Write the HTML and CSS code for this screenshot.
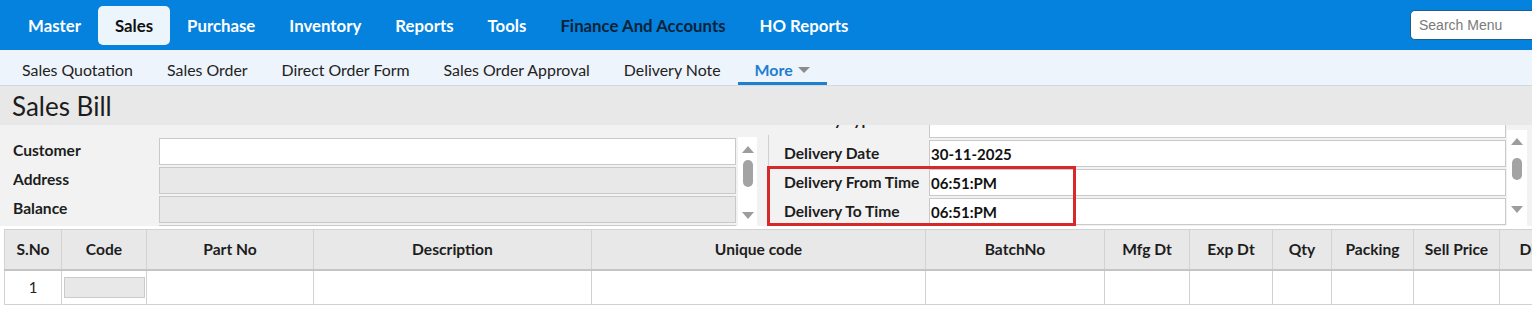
FILE: index.html
```html
<!DOCTYPE html>
<html lang="en">
<head>
<meta charset="UTF-8">
<meta name="viewport" content="width=device-width, initial-scale=1.0">
<title>Sales Bill</title>
<link rel="stylesheet" href="styles.css">
</head>
<body>

<header class="topbar">
  <nav class="main-menu">
    <a href="#master">Master</a>
    <a href="#sales" class="active">Sales</a>
    <a href="#purchase">Purchase</a>
    <a href="#inventory">Inventory</a>
    <a href="#reports">Reports</a>
    <a href="#tools">Tools</a>
    <a href="#finance" class="dark">Finance And Accounts</a>
    <a href="#ho-reports">HO Reports</a>
  </nav>
  <input type="text" class="menu-search" placeholder="Search Menu">
</header>

<nav class="subbar">
  <a href="#quotation">Sales Quotation</a>
  <a href="#order">Sales Order</a>
  <a href="#direct">Direct Order Form</a>
  <a href="#approval">Sales Order Approval</a>
  <a href="#delivery">Delivery Note</a>
  <a href="#more" class="more">More <span class="caret"></span></a>
</nav>

<div class="page-title">
  <h1>Sales Bill</h1>
</div>

<section class="bill-head">
  <!-- Customer details -->
  <div class="panel panel-left">
    <div class="rows">
      <div class="row"><label>Customer</label><input type="text" class="fld"></div>
      <div class="row"><label>Address</label><input type="text" class="fld ro" readonly></div>
      <div class="row"><label>Balance</label><input type="text" class="fld ro" readonly></div>
      <div class="row"><label>Narration</label><input type="text" class="fld"></div>
    </div>
    <div class="vscroll vscroll-left">
      <span class="arr-up"></span>
      <span class="thumb"></span>
      <span class="arr-down"></span>
    </div>
  </div>

  <div class="divider"></div>

  <!-- Delivery details -->
  <div class="panel panel-right">
    <div class="rows">
      <div class="rows-inner">
        <div class="row cut"><label>Delivery Type</label><input type="text" class="fld"></div>
        <div class="row"><label>Delivery Date</label><input type="text" class="fld" value="30-11-2025"></div>
        <div class="row"><label>Delivery From Time</label><input type="text" class="fld" value="06:51:PM"></div>
        <div class="row"><label>Delivery To Time</label><input type="text" class="fld" value="06:51:PM"></div>
      </div>
    </div>
    <div class="vscroll vscroll-right">
      <span class="arr-up"></span>
      <span class="thumb"></span>
      <span class="arr-down"></span>
    </div>
  </div>

  <div class="highlight"></div>
</section>

<table class="items">
  <colgroup>
    <col style="width:57px"><col style="width:85px"><col style="width:167px"><col style="width:278px">
    <col style="width:334px"><col style="width:179px"><col style="width:85px"><col style="width:83px">
    <col style="width:59px"><col style="width:82px"><col style="width:86px"><col style="width:70px">
  </colgroup>
  <thead>
    <tr>
      <th>S.No</th><th>Code</th><th>Part No</th><th>Description</th><th>Unique code</th><th>BatchNo</th>
      <th>Mfg Dt</th><th>Exp Dt</th><th>Qty</th><th>Packing</th><th>Sell Price</th><th>Disc</th>
    </tr>
  </thead>
  <tbody>
    <tr>
      <td class="sno">1</td><td><input type="text" class="code-fld" readonly></td><td></td><td></td><td></td><td></td>
      <td></td><td></td><td></td><td></td><td></td><td></td>
    </tr>
  </tbody>
</table>

</body>
</html>
```

FILE: styles.css
```css
/* Basic reset */
* {
  margin: 0;
  padding: 0;
  box-sizing: border-box;
}

html, body {
  overflow: hidden;
}

body {
  font-family: Lato, "Open Sans", Arial, sans-serif;
  color: #222;
  background: #fff;
}

/* Top menu bar */
.topbar {
  display: flex;
  align-items: center;
  height: 50px;
  background: #0482de;
  padding-left: 11px;
}

.main-menu {
  display: flex;
}

.main-menu a {
  color: #fff;
  text-decoration: none;
  font-weight: bold;
  font-size: 16.8px;
  line-height: 38px;
  padding: 1px 17px 0;
  border-radius: 5px;
}

.main-menu a.active {
  background: #ecf4fc;
  color: #111;
}

.main-menu a.dark {
  color: #0d2338;
}

.menu-search {
  margin-left: auto;
  width: 122px;
  height: 30px;
  border: 1px solid #1d5d8c;
  border-right: none;
  border-radius: 5px 0 0 5px;
  padding-left: 8px;
  font-family: "Liberation Sans", Arial, sans-serif;
  font-size: 14px;
  outline: none;
}

.menu-search::placeholder {
  color: #7a7a7a;
}

/* Sub menu */
.subbar {
  display: flex;
  height: 36px;
  background: #edf4fc;
  border-bottom: 1px solid #d3d9e0;
  padding-left: 5px;
}

.subbar a {
  display: flex;
  align-items: center;
  padding: 4px 17px 0;
  font-size: 15.9px;
  color: #222;
  text-decoration: none;
}

.subbar a.more {
  color: #1e7fd1;
  font-weight: bold;
  border-bottom: 3px solid #1e7fd1;
  padding-top: 7px;
}

.caret {
  display: inline-block;
  margin-left: 5px;
  border-left: 6px solid transparent;
  border-right: 6px solid transparent;
  border-top: 6px solid #8a8a8a;
}

/* Page title */
.page-title {
  height: 39px;
  background: #e8e8e8;
  display: flex;
  align-items: center;
  padding-left: 12px;
}

.page-title h1 {
  font-size: 26px;
  font-weight: normal;
  color: #1c1c1c;
}

/* Bill header form */
.bill-head {
  position: relative;
  display: flex;
  height: 101px;
  background: #f2f2f2;
  overflow: hidden;
  margin-bottom: 3px;
}

.panel {
  display: flex;
}

.panel-left {
  padding-left: 13px;
}

.panel-left .rows {
  padding-top: 13px;
}

.panel-right {
  padding-left: 15px;
}

.rows {
  overflow: hidden;
}

.rows-inner {
  margin-top: -14px;
}

.row {
  display: flex;
  align-items: center;
  height: 27px;
  margin-bottom: 2px;
}

.row label {
  width: 146px;
  font-weight: bold;
  font-size: 15.6px;
  color: #1d1d1d;
  margin-bottom: 3px;
}

.panel-right .row label {
  width: 145px;
  margin-bottom: 1px;
}

.panel-right .row.cut label {
  margin-bottom: 11px;
}

.fld {
  width: 577px;
  height: 27px;
  border: 1px solid #c9c9c9;
  background: #fff;
  padding: 0 1px;
  font-family: Lato, Arial, sans-serif;
  font-weight: bold;
  font-size: 15px;
  color: #111;
  outline: none;
}

.fld.ro {
  background: #e8e8e8;
}

.divider {
  width: 1px;
  margin: 10px 0 0 11px;
  background: #cfcfcf;
}

/* Fake scrollbars */
.vscroll {
  display: flex;
  flex-direction: column;
  align-items: center;
  background: #fff;
}

.vscroll-left {
  width: 19px;
  margin: 12px 0 0 2px;
  padding: 9px 0 7px;
}

.vscroll-right {
  width: 20px;
  margin: 5px 0 0 1px;
  padding: 8px 0 13px;
}

.arr-up {
  border-left: 6px solid transparent;
  border-right: 6px solid transparent;
  border-bottom: 7px solid #9d9d9d;
}

.arr-down {
  margin-top: auto;
  border-left: 6px solid transparent;
  border-right: 6px solid transparent;
  border-top: 7px solid #9d9d9d;
}

.thumb {
  width: 10px;
  border-radius: 5px;
  background: #a3a3a3;
}

.vscroll-left .thumb {
  margin-top: 7px;
  height: 27px;
}

.vscroll-right .thumb {
  margin-top: 13px;
  height: 22px;
}

/* Red annotation box */
.highlight {
  position: absolute;
  left: 767px;
  top: 41px;
  width: 309px;
  height: 60px;
  border: 3px solid #d62929;
}

/* Items grid */
.items {
  margin-left: 4px;
  border-collapse: collapse;
  table-layout: fixed;
  width: 1565px;
}

.items th {
  height: 40px;
  background: #e8e8e8;
  border: 1px solid #d2d2d2;
  border-bottom: 2px solid #c4c4c4;
  font-size: 15.6px;
  font-weight: bold;
  color: #1d1d1d;
  text-align: center;
  white-space: nowrap;
}

.items td {
  height: 35px;
  border: 1px solid #d2d2d2;
  font-size: 15px;
  text-align: center;
}

.code-fld {
  display: block;
  width: 81px;
  height: 21px;
  margin-left: 2px;
  background: #e8e8e8;
  border: 1px solid #cbcbcb;
  outline: none;
}
```
